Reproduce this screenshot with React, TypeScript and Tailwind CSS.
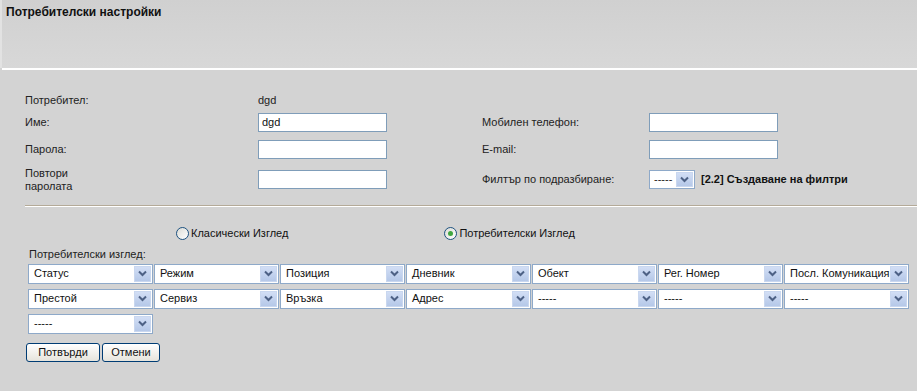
import React from 'react';

const selectsRow1 = ['Статус', 'Режим', 'Позиция', 'Дневник', 'Обект', 'Рег. Номер', 'Посл. Комуникация'];
const selectsRow2 = ['Престой', 'Сервиз', 'Връзка', 'Адрес', '-----', '-----', '-----'];

const Arrow: React.FC = () => (
  <div className="flex h-full w-[17px] items-center justify-center border border-[#c9d7ef] bg-gradient-to-b from-[#d2def5] to-[#b5c8e8]">
    <svg width="9" height="7" viewBox="0 0 9 7">
      <path d="M1 1.5 L4.5 5 L8 1.5" fill="none" stroke="#4d6185" strokeWidth="2" />
    </svg>
  </div>
);

const FakeSelect: React.FC<{ value: string; width: string }> = ({ value, width }) => (
  <div className={`flex h-[20px] ${width} items-center border border-[#8ea9c9] bg-white p-px`}>
    <span className="flex-1 truncate pl-[4px] text-[11px] leading-none text-[#111]">{value}</span>
    <Arrow />
  </div>
);

const TextBox: React.FC<{ value?: string }> = ({ value }) => (
  <div className="flex h-[19px] w-[129px] items-center border border-[#7f9db9] bg-white pl-[3px] text-[11px] text-[#111]">
    {value}
  </div>
);

const Radio: React.FC<{ checked?: boolean; label: string }> = ({ checked, label }) => (
  <div className="flex items-center gap-[2px]">
    <div className="flex h-[13px] w-[13px] items-center justify-center rounded-full border border-[#1c5180] bg-gradient-to-br from-[#dcdcd6] to-white">
      {checked && <div className="h-[5px] w-[5px] rounded-full bg-[#3fa63f]" />}
    </div>
    <span className="text-[11px] text-[#111]">{label}</span>
  </div>
);

const Button: React.FC<{ label: string; width: string }> = ({ label, width }) => (
  <div
    className={`flex h-[19px] ${width} items-center justify-center rounded-[3px] border border-[#003c74] bg-gradient-to-b from-white to-[#e6e4dc] text-[11px] text-[#111]`}
  >
    {label}
  </div>
);

export default function App() {
  return (
    <div className="h-[391px] w-[917px] overflow-hidden bg-[#d3d3d3]" style={{ fontFamily: '"Liberation Sans", Arial, sans-serif' }}>
      {/* Header */}
      <div className="h-[68px] border-l-2 border-[#e2e2e2] bg-gradient-to-b from-[#d0d0d0] to-[#d8d8d8] pl-[4px] pt-[3px]">
        <h1 className="text-[12px] font-bold text-[#111]">Потребителски настройки</h1>
      </div>
      <div className="ml-[2px] h-[2px] bg-white" />

      {/* Form */}
      <div className="pl-[25px] pt-[20px] text-[11px] text-[#222]">
        <div className="flex h-[20px] items-center">
          <span className="w-[233px]">Потребител:</span>
          <span>dgd</span>
        </div>
        <div className="mt-[3px] flex h-[19px] items-center">
          <span className="w-[233px]">Име:</span>
          <TextBox value="dgd" />
          <span className="ml-[95px] w-[167px]">Мобилен телефон:</span>
          <TextBox />
        </div>
        <div className="mt-[8px] flex h-[19px] items-center">
          <span className="w-[233px]">Парола:</span>
          <TextBox />
          <span className="ml-[95px] w-[167px]">E-mail:</span>
          <TextBox />
        </div>
        <div className="mt-[11px] flex h-[19px] items-center">
          <span className="w-[233px] leading-[13px]">
            Повтори
            <br />
            паролата
          </span>
          <TextBox />
          <span className="ml-[95px] w-[167px]">Филтър по подразбиране:</span>
          <div className="flex h-[19px] w-[46px] items-center border border-[#8ea9c9] bg-white p-px">
            <span className="flex-1 pl-[3px] leading-none">-----</span>
            <Arrow />
          </div>
          <span className="ml-[6px] font-bold text-[#111]">[2.2] Създаване на филтри</span>
        </div>

        {/* Separator */}
        <div className="mt-[16px] border-t border-b border-t-[#b4aa98] border-b-white" />

        <div className="mt-[18px] flex h-[16px] items-center">
          <div className="ml-[151px]">
            <Radio label="Класически Изглед" />
          </div>
          <div className="ml-[156px]">
            <Radio checked label="Потребителски Изглед" />
          </div>
        </div>

        <div className="mt-[5px] pl-[4px]">Потребителски изглед:</div>

        <div className="mt-[1px] pl-[3px]">
          <div className="flex gap-px">
            {selectsRow1.map((s) => (
              <FakeSelect key={s} value={s} width="w-[125px]" />
            ))}
          </div>
          <div className="mt-[5px] flex gap-px">
            {selectsRow2.map((s, i) => (
              <FakeSelect key={i} value={s} width="w-[125px]" />
            ))}
          </div>
          <div className="mt-[5px] flex">
            <FakeSelect value="-----" width="w-[125px]" />
          </div>
        </div>

        <div className="mt-[9px] flex gap-[2px] pl-[1px]">
          <Button label="Потвърди" width="w-[74px]" />
          <Button label="Отмени" width="w-[58px]" />
        </div>
      </div>
    </div>
  );
}
